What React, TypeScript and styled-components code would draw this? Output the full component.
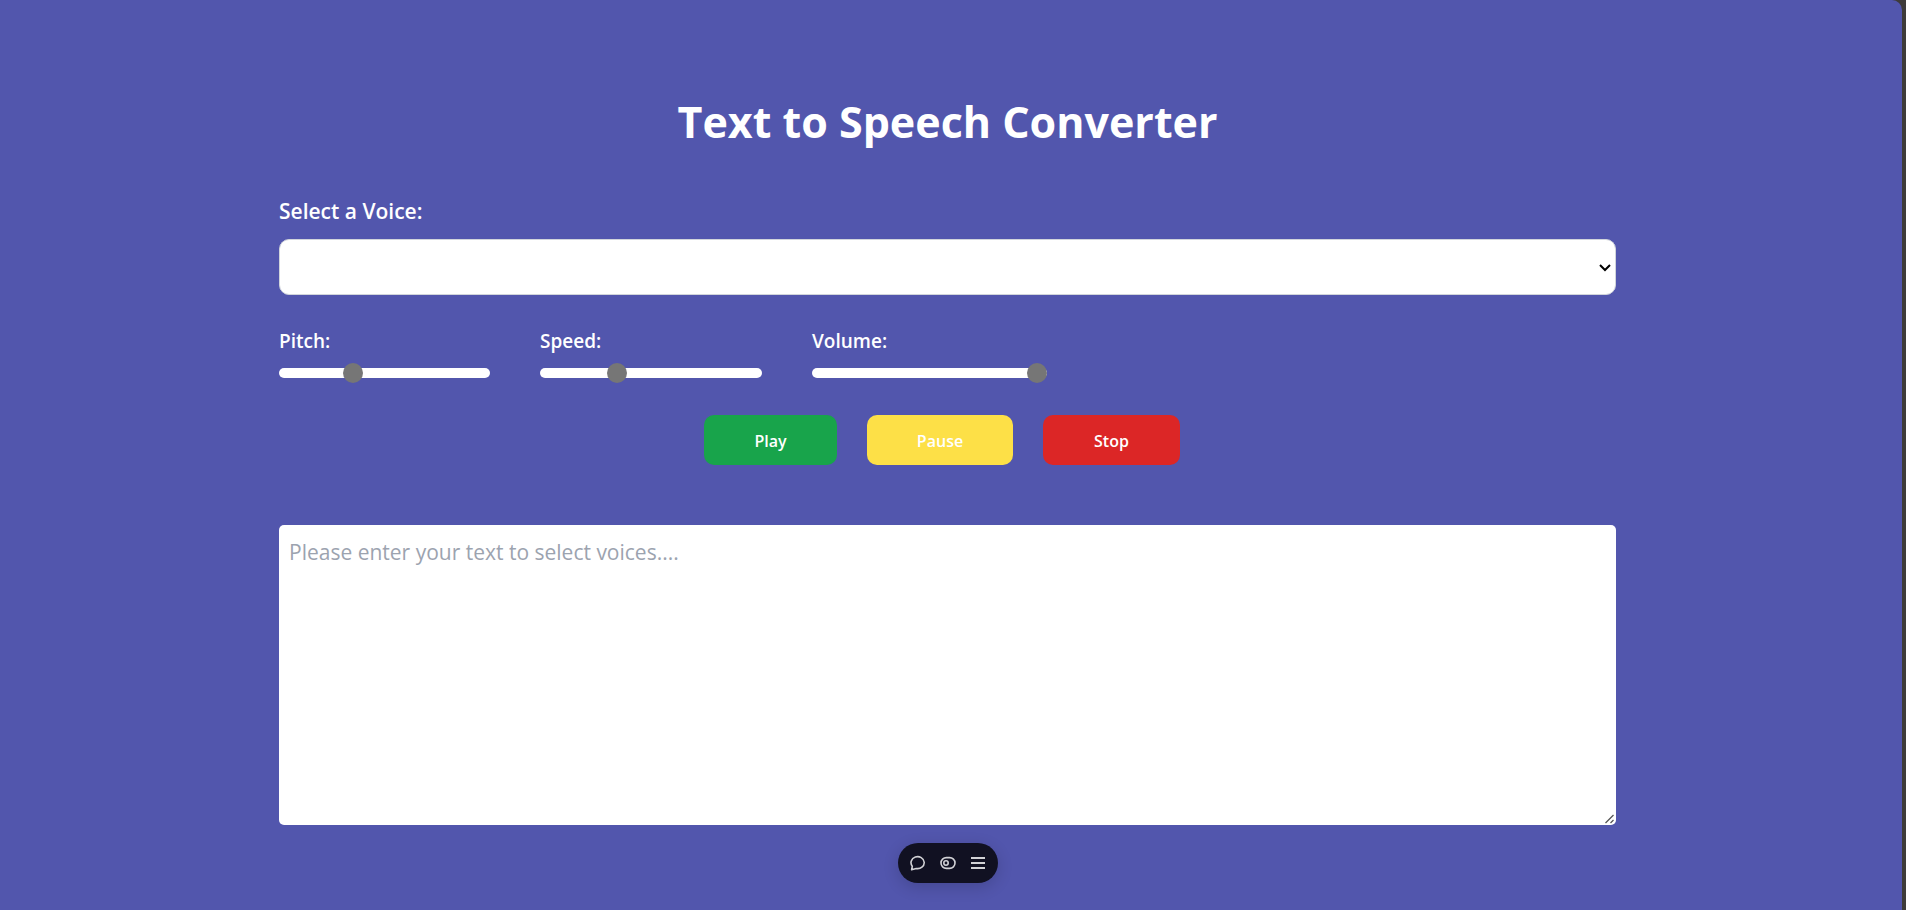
import React, { useState } from "react";
import styled, { createGlobalStyle } from "styled-components";

const GlobalStyle = createGlobalStyle`
  *, *::before, *::after { box-sizing: border-box; }
  body {
    margin: 0;
    background: #3e3b3a;
    font-family: "Segoe UI", "Open Sans", "Noto Sans", sans-serif;
    color: #ffffff;
  }
  button, input, select, textarea { font-family: inherit; }
`;

const Page = styled.div`
  min-height: 100vh;
  margin-right: 4px;
  padding: 90px 7px 80px 0;
  background: #5256ad;
  border-radius: 0 10px 0 0;
`;

const Container = styled.main`
  display: flex;
  flex-direction: column;
  max-width: 1537px;
  margin: 0 auto;
  padding: 0 100px;
`;

const Title = styled.h1`
  margin: 0 0 40px;
  font-size: 43px;
  line-height: 64px;
  font-weight: 700;
  text-align: center;
`;

const VoiceLabel = styled.label`
  margin-bottom: 10px;
  font-size: 21px;
  line-height: 35px;
  font-weight: 600;
`;

const SelectWrap = styled.div`
  position: relative;

  svg {
    position: absolute;
    top: 25px;
    right: 5px;
    pointer-events: none;
  }
`;

const VoiceSelect = styled.select`
  appearance: none;
  display: block;
  width: 100%;
  height: 56px;
  padding: 0 30px 0 10px;
  border: 1px solid #d1d5db;
  border-radius: 10px;
  background: #ffffff;
  color: #000000;
  font-size: 21px;
`;

const Sliders = styled.div`
  display: flex;
  flex-wrap: wrap;
  gap: 50px;
  margin-top: 32px;
`;

const SliderField = styled.div<{ $width: number }>`
  display: flex;
  flex-direction: column;
  gap: 12px;
  width: ${(p) => p.$width}px;
`;

const SliderLabel = styled.label`
  font-size: 19px;
  line-height: 29px;
  font-weight: 600;
`;

const Slider = styled.input`
  appearance: none;
  width: 100%;
  height: 10px;
  margin: 0;
  border-radius: 5px;
  background: #ffffff;

  &::-webkit-slider-thumb {
    appearance: none;
    width: 20px;
    height: 20px;
    border-radius: 50%;
    background: #767676;
  }
`;

const Actions = styled.div`
  display: flex;
  justify-content: center;
  gap: 30px;
  margin: 37px 11px 60px 0;
`;

const ActionButton = styled.button<{ $color: string; $width: number }>`
  width: ${(p) => p.$width}px;
  height: 50px;
  padding: 2px 0 0;
  border: 0;
  border-radius: 10px;
  background: ${(p) => p.$color};
  color: #ffffff;
  font-size: 16px;
  font-weight: 600;
`;

const TextBoxWrap = styled.div`
  position: relative;

  svg {
    position: absolute;
    right: 1px;
    bottom: 1px;
    pointer-events: none;
  }
`;

const TextBox = styled.textarea`
  display: block;
  width: 100%;
  height: 300px;
  padding: 10px;
  border: 0;
  border-radius: 5px;
  background: #ffffff;
  color: #111827;
  font-size: 21px;
  line-height: 35px;
  resize: none;

  &::placeholder { color: #9ca3af; }
`;

const Toolbar = styled.div`
  position: fixed;
  bottom: 27px;
  left: calc(50% - 5px);
  transform: translateX(-50%);
  display: flex;
  align-items: center;
  justify-content: center;
  width: 100px;
  height: 40px;
  border-radius: 20px;
  background: #111122;
  box-shadow: 0 4px 16px rgba(0, 0, 0, 0.16);
`;

const ToolButton = styled.button`
  display: flex;
  align-items: center;
  justify-content: center;
  width: 30px;
  height: 30px;
  padding: 0;
  border: 0;
  background: none;
  color: #d2d2d6;
`;

const sliders = [
  { id: "pitch", label: "Pitch:", width: 211, min: 0.5, max: 2, initial: 1 },
  { id: "speed", label: "Speed:", width: 222, min: 0.5, max: 2, initial: 1 },
  { id: "volume", label: "Volume:", width: 235, min: 0, max: 1, initial: 1 },
];

function RangeField({ id, label, width, min, max, initial }: (typeof sliders)[number]) {
  const [value, setValue] = useState(initial);
  return (
    <SliderField $width={width}>
      <SliderLabel htmlFor={id}>{label}</SliderLabel>
      <Slider
        id={id}
        type="range"
        min={min}
        max={max}
        step={0.1}
        value={value}
        onChange={(e) => setValue(Number(e.target.value))}
      />
    </SliderField>
  );
}

export default function App() {
  const [text, setText] = useState("");

  return (
    <>
      <GlobalStyle />
      <Page>
        <Container>
          <Title>Text to Speech Converter</Title>
          <VoiceLabel htmlFor="voice">Select a Voice:</VoiceLabel>
          <SelectWrap>
            <VoiceSelect id="voice" />
            <svg width="12" height="8" viewBox="0 0 12 8" fill="none" stroke="#000000" strokeWidth="2">
              <path d="M1 1L6 6L11 1" />
            </svg>
          </SelectWrap>
          <Sliders>
            {sliders.map((s) => (
              <RangeField key={s.id} {...s} />
            ))}
          </Sliders>
          <Actions>
            <ActionButton type="button" $color="#18a44b" $width={133}>Play</ActionButton>
            <ActionButton type="button" $color="#fde047" $width={146}>Pause</ActionButton>
            <ActionButton type="button" $color="#dc2626" $width={137}>Stop</ActionButton>
          </Actions>
          <TextBoxWrap>
            <TextBox
              aria-label="Text to speak"
              placeholder="Please enter your text to select voices...."
              value={text}
              onChange={(e) => setText(e.target.value)}
            />
            <svg width="10" height="10" viewBox="0 0 10 10" fill="none" stroke="#555555" strokeWidth="1.3">
              <path d="M0.5 9L8.5 1M5.5 9L8.5 6" />
            </svg>
          </TextBoxWrap>
        </Container>
      </Page>
      <Toolbar>
        <ToolButton type="button" aria-label="Comments">
          <svg width="16" height="16" viewBox="0 0 16 16" fill="none" stroke="currentColor" strokeWidth="1.6" strokeLinejoin="round">
            <path d="M1.6 14.8 L2.3 11.2 A6.6 6 0 1 1 6.2 13.5 Z" />
          </svg>
        </ToolButton>
        <ToolButton type="button" aria-label="Flags">
          <svg width="16" height="16" viewBox="0 0 16 16" fill="none" stroke="currentColor" strokeWidth="1.6">
            <rect x="1" y="2.6" width="14" height="10.8" rx="5.4" />
            <circle cx="6" cy="8" r="2.2" />
          </svg>
        </ToolButton>
        <ToolButton type="button" aria-label="Menu">
          <svg width="16" height="16" viewBox="0 0 16 16" fill="none" stroke="currentColor" strokeWidth="1.8">
            <path d="M1 3H15M1 8H15M1 13H15" />
          </svg>
        </ToolButton>
      </Toolbar>
    </>
  );
}
